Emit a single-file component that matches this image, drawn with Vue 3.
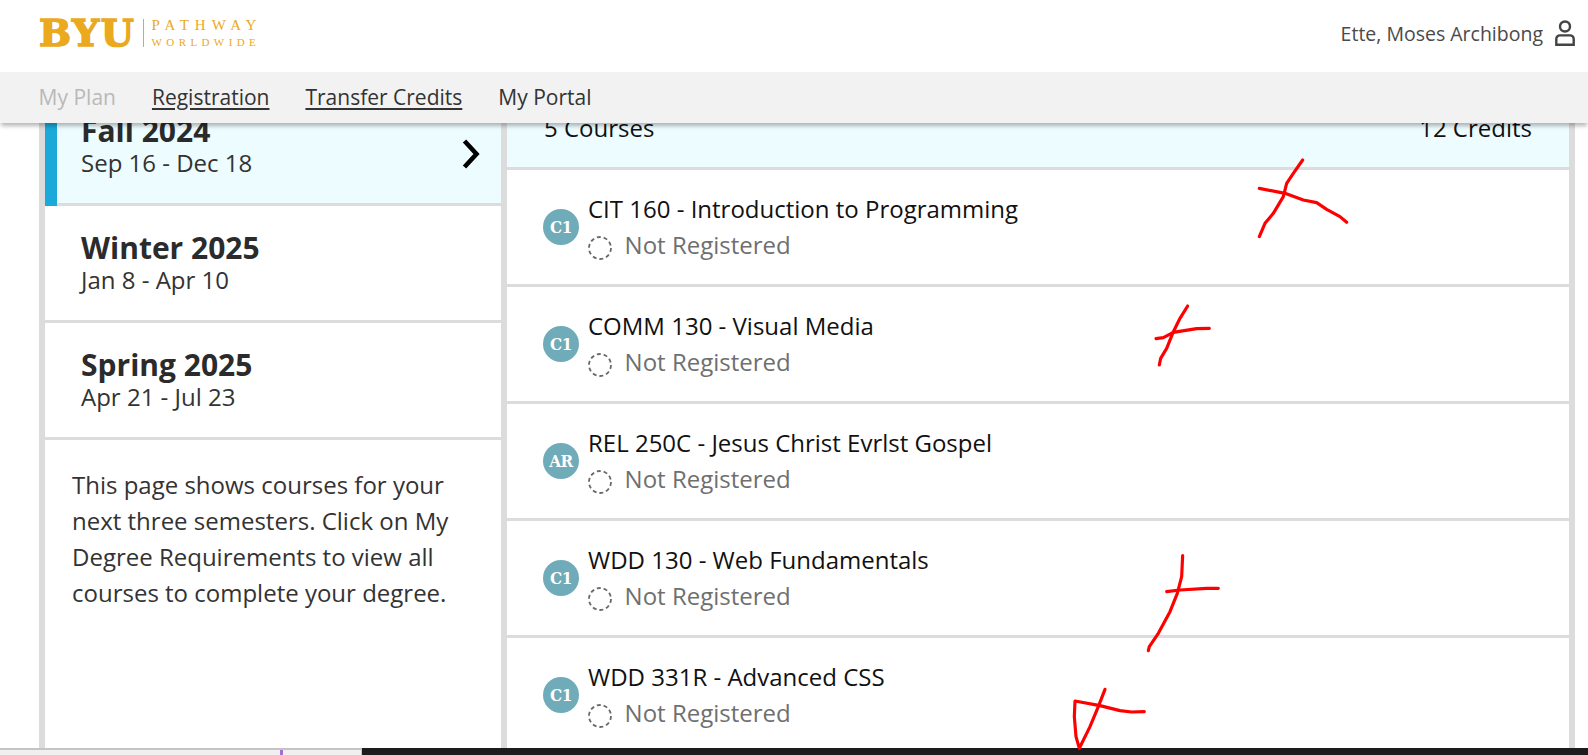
<script setup>
const terms = [
  { name: 'Fall 2024', dates: 'Sep 16 - Dec 18', active: true },
  { name: 'Winter 2025', dates: 'Jan 8 - Apr 10' },
  { name: 'Spring 2025', dates: 'Apr 21 - Jul 23' },
]
const courses = [
  { tag: 'C1', title: 'CIT 160 - Introduction to Programming' },
  { tag: 'C1', title: 'COMM 130 - Visual Media' },
  { tag: 'AR', title: 'REL 250C - Jesus Christ Evrlst Gospel' },
  { tag: 'C1', title: 'WDD 130 - Web Fundamentals' },
  { tag: 'C1', title: 'WDD 331R - Advanced CSS' },
]
const marks = [
  { t: 'translate(1130 150) scale(.3333)', lines: [
    '518,30 490,70 470,100 460,140 430,190 405,220 388,260',
    '388,115 465,130 520,150 560,158 590,178 630,200 650,217' ] },
  { t: 'translate(1130 150) scale(.3333)', lines: [
    '173,468 150,505 128,550 110,595 92,625 88,645',
    '78,566 100,563 130,547 200,536 238,535' ] },
  { t: 'translate(1040 530) scale(.3333)', lines: [
    '428,77 425,140 412,190 390,245 355,310 328,350 325,362',
    '380,185 420,180 500,175 535,175' ] },
  { t: 'translate(1040 530) scale(.3333)', lines: [
    '195,478 175,530 150,590 118,655 108,620 103,560 105,513 180,527 240,542 275,546 313,545' ] },
]
</script>

<template>
  <div class="page">
    <header class="top">
      <div class="logo">
        <span class="byu">BYU</span>
        <span class="logo-text">
          <span class="pathway">PATHWAY</span>
          <span class="worldwide">WORLDWIDE</span>
        </span>
      </div>
      <div class="user">
        <span>Ette, Moses Archibong</span>
        <svg class="user-icon" viewBox="0 0 20 26" width="20" height="26" fill="none" stroke="#444" stroke-width="2.4">
          <circle cx="10" cy="6.5" r="5" />
          <path d="M1.3 24.8V19a3.6 3.6 0 0 1 3.6-3.6h10.2a3.6 3.6 0 0 1 3.6 3.6v5.8z" />
        </svg>
      </div>
    </header>

    <nav class="nav">
      <a class="muted">My Plan</a>
      <a class="under">Registration</a>
      <a class="under">Transfer Credits</a>
      <a>My Portal</a>
    </nav>

    <main class="main">
      <div class="columns">
        <aside class="left">
          <div v-for="t in terms" :key="t.name" class="term" :class="{ active: t.active }">
            <div class="term-name">{{ t.name }}</div>
            <div class="term-dates">{{ t.dates }}</div>
            <svg v-if="t.active" class="chev" viewBox="0 0 18 30" width="18" height="30" fill="none" stroke="#000" stroke-width="4.6">
              <path d="M2.5 2l12 13-12 13" />
            </svg>
          </div>
          <p class="note">This page shows courses for your next three semesters. Click on My Degree Requirements to view all courses to complete your degree.</p>
        </aside>
        <section class="right">
          <div class="summary">
            <span>5 Courses</span>
            <span>12 Credits</span>
          </div>
          <div v-for="c in courses" :key="c.title" class="course">
            <span class="badge">{{ c.tag }}</span>
            <div class="info">
              <div class="title">{{ c.title }}</div>
              <div class="status">
                <svg class="dash" viewBox="0 0 24 24" width="24" height="24" fill="none" stroke="#6a6a6a" stroke-width="1.8">
                  <circle cx="12" cy="12" r="11" stroke-dasharray="4 2.9" />
                </svg>
                <span>Not Registered</span>
              </div>
            </div>
          </div>
        </section>
      </div>
    </main>

    <footer class="taskbar">
      <div class="task-light"><i class="task-bit"></i></div>
      <div class="task-dark"></div>
    </footer>

    <svg class="ink" viewBox="0 0 1588 755" width="1588" height="755" fill="none" stroke="#f00" stroke-width="9.5" stroke-linecap="round" stroke-linejoin="round">
      <g v-for="(m, i) in marks" :key="i" :transform="m.t">
        <polyline v-for="l in m.lines" :key="l" :points="l" />
      </g>
    </svg>
  </div>
</template>

<style>
html, body { margin: 0; overflow: hidden; background: #fff; }
</style>

<style scoped>
.page {
  position: relative;
  width: 1588px;
  height: 755px;
  display: flex;
  flex-direction: column;
  overflow: hidden;
  background: #fff;
  font-family: "Open Sans", sans-serif;
  color: #222;
}
.top {
  height: 72px;
  flex: none;
  display: flex;
  align-items: flex-start;
  justify-content: space-between;
  padding: 0 13px 0 39px;
  box-sizing: border-box;
  background: #fff;
}
.logo {
  display: flex;
  align-items: center;
  height: 66px;
  color: #eba91d;
}
.byu {
  font-family: "DejaVu Serif", serif;
  font-weight: 700;
  font-size: 38px;
  line-height: 1;
  letter-spacing: 1.6px;
  padding-right: 7px;
  -webkit-text-stroke: 1.5px #eba91d;
}
.logo-text {
  display: flex;
  flex-direction: column;
  font-family: "Liberation Serif", serif;
  border-left: 1px solid #eba91d;
  padding-left: 8px;
  height: 28px;
  justify-content: space-between;
}
.pathway {
  font-size: 15px;
  line-height: 13px;
  letter-spacing: 6px;
}
.worldwide {
  font-size: 11px;
  line-height: 9px;
  letter-spacing: 4.4px;
}
.user {
  display: flex;
  align-items: center;
  gap: 12px;
  height: 66px;
  font-size: 19.5px;
  color: #4a4a4a;
}
.nav {
  position: relative;
  z-index: 2;
  flex: none;
  height: 51px;
  box-sizing: border-box;
  padding: 0 0 2px 38.6px;
  display: flex;
  align-items: center;
  gap: 36px;
  background: #f2f2f2;
  box-shadow: 0 4px 4px -1px rgba(0, 0, 0, .28);
  font-size: 21px;
  color: #333;
}
.nav .muted { color: #b9b9b9; }
.nav .under { text-decoration: underline; text-underline-offset: 3px; }
.main {
  flex: 1;
  min-height: 0;
  overflow: hidden;
  padding: 0 13px 0 39px;
}
.columns {
  display: flex;
  margin-top: -34px;
}
.left {
  width: 468px;
  box-sizing: border-box;
  flex: none;
  min-height: 700px;
  border-left: 6px solid #dcdcdc;
  border-right: 6px solid #dcdcdc;
}
.term {
  position: relative;
  height: 117px;
  box-sizing: border-box;
  padding: 24px 0 0 36px;
  border-bottom: 3px solid #dcdcdc;
}
.term.active {
  background: #edfcff;
}
.term.active::before {
  content: "";
  position: absolute;
  left: 0;
  top: 0;
  bottom: -3px;
  width: 12px;
  background: #1aa9d8;
}
.term-name {
  font-size: 30px;
  font-weight: 700;
  line-height: 36px;
  color: #2b2b2b;
}
.term-dates {
  font-size: 24px;
  line-height: 28px;
  color: #333;
}
.chev {
  position: absolute;
  top: 50px;
  right: 21px;
}
.note {
  margin: 27px 30px 0 27px;
  font-size: 24px;
  line-height: 36px;
  color: #333;
}
.right {
  flex: 1;
  border-right: 6px solid #dcdcdc;
}
.summary {
  height: 81px;
  box-sizing: border-box;
  border-bottom: 3px solid #dcdcdc;
  background: #edfcff;
  display: flex;
  justify-content: space-between;
  padding: 24px 37px 0 37px;
  font-size: 24px;
  line-height: 30px;
  color: #111;
}
.course {
  height: 117px;
  box-sizing: border-box;
  border-bottom: 3px solid #dcdcdc;
  display: flex;
  align-items: center;
  padding-left: 36px;
  gap: 9px;
}
.badge {
  width: 36px;
  height: 36px;
  border-radius: 50%;
  background: #6fabb9;
  color: #fff;
  font-family: "DejaVu Serif", serif;
  font-stretch: condensed;
  font-weight: 700;
  font-size: 17px;
  letter-spacing: -.5px;
  display: flex;
  align-items: center;
  justify-content: center;
}
.title {
  font-size: 24px;
  line-height: 30px;
  color: #111;
  position: relative;
  top: -1px;
}
.status {
  display: flex;
  align-items: center;
  gap: 12.6px;
  margin-top: 5px;
  font-size: 24px;
  line-height: 30px;
  color: #6f6f6f;
}
.dash {
  flex: none;
  margin-top: 6px;
}
.taskbar {
  position: relative;
  z-index: 3;
  flex: none;
  height: 7px;
  display: flex;
}
.task-light {
  width: 362px;
  box-sizing: border-box;
  border-top: 2px solid #c4c4c4;
  border-right: 1px solid #c4c4c4;
  background: #f0f0f0;
  padding-left: 280px;
  overflow: hidden;
}
.task-bit {
  display: block;
  width: 3px;
  height: 5px;
  background: #a56fd6;
}
.task-dark {
  flex: 1;
  background: #1c1c1e;
}
.ink {
  position: absolute;
  top: 0;
  left: 0;
  z-index: 4;
  pointer-events: none;
}
</style>
